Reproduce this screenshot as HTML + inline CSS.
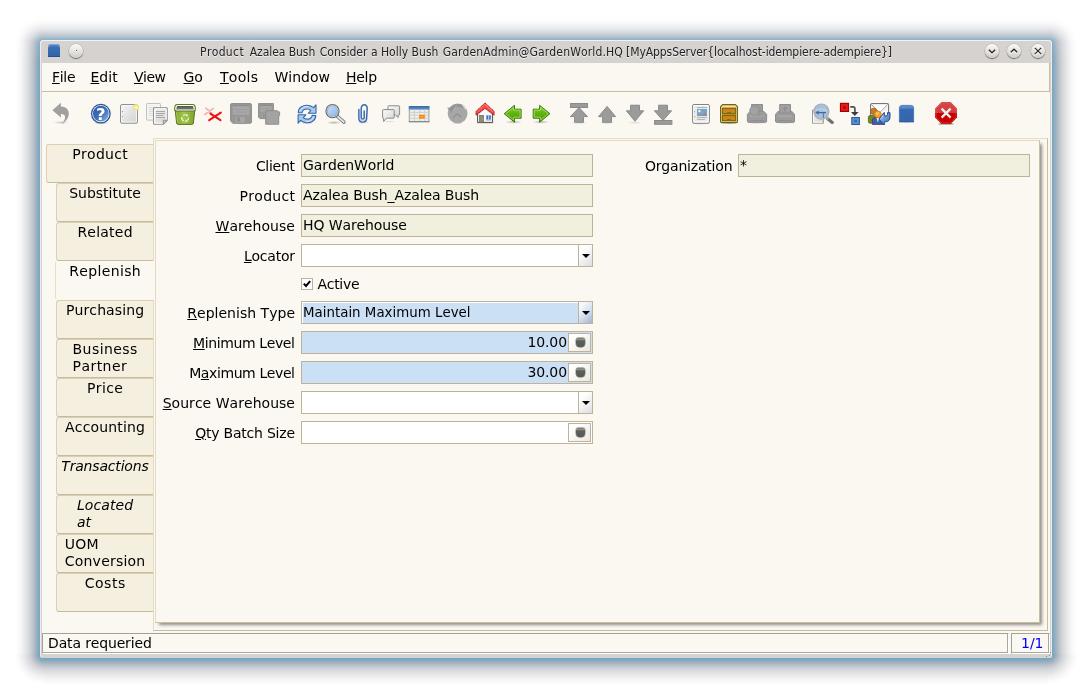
<!DOCTYPE html>
<html lang="en"><head><meta charset="utf-8"><title>Product</title>
<style>
html,body{margin:0;padding:0;background:#fff;width:1092px;height:698px;overflow:hidden}
body{position:relative;will-change:transform;font-kerning:none;font-family:"DejaVu Sans","Liberation Sans",sans-serif;font-size:14px;line-height:17px;color:#000}
div,span,svg{position:absolute;box-sizing:border-box}
u{text-decoration:underline;text-underline-offset:1px;text-decoration-thickness:1px}
/* window shadow */
.sh{pointer-events:none}
#shT{left:44px;top:12px;width:1004px;height:28px;background:linear-gradient(to top,#6fa8c8 0px,#84a9c0 1.5px,#96aebf 3px,#acb7c4 5px,#bcc3cb 7px,#d1d4d8 10px,#e3e4e6 14px,#f3f3f3 18px,#fafafa 21px,#ffffff 25px)}
#shB{left:44px;top:658px;width:1004px;height:28px;background:linear-gradient(to bottom,#6aa9ca 0px,#7aa8c3 1.5px,#8eabbf 3px,#a5b4c2 5px,#b8bfc7 7px,#cccfd4 10px,#dedfe1 14px,#ececed 18px,#f6f6f6 22px,#fff 27px)}
#shL{left:12px;top:44px;width:28px;height:610px;background:linear-gradient(to left,#6fa8c8 0px,#84a9c0 1.5px,#96aebf 3px,#acb7c4 5px,#bcc3cb 7px,#d1d4d8 10px,#e3e4e6 14px,#f3f3f3 18px,#fafafa 21px,#ffffff 25px)}
#shR{left:1052px;top:44px;width:28px;height:610px;background:linear-gradient(to right,#6fa8c8 0px,#84a9c0 1.5px,#96aebf 3px,#acb7c4 5px,#bcc3cb 7px,#d1d4d8 10px,#e3e4e6 14px,#f3f3f3 18px,#fafafa 21px,#ffffff 25px)}
.shC{width:32px;height:32px}
#shTL{left:12px;top:12px;background:radial-gradient(circle at 32px 32px,#6fa8c8 4px,#84a9c0 5.5px,#96aebf 7px,#acb7c4 9px,#bcc3cb 11px,#d1d4d8 14px,#e3e4e6 18px,#f3f3f3 22px,#fafafa 25px,#ffffff 29px)}
#shTR{left:1048px;top:12px;background:radial-gradient(circle at 0 32px,#6fa8c8 4px,#84a9c0 5.5px,#96aebf 7px,#acb7c4 9px,#bcc3cb 11px,#d1d4d8 14px,#e3e4e6 18px,#f3f3f3 22px,#fafafa 25px,#ffffff 29px)}
#shBL{left:12px;top:654px;background:radial-gradient(circle at 32px 0,#6ca8c9 4.0px,#7fa8c1 5.5px,#92acbf 7.0px,#a8b5c3 9.0px,#bac1c9 11.0px,#ced1d6 14.0px,#e0e1e3 18.0px,#efeff0 22.0px,#f8f8f8 25.5px,#ffffff 30.0px)}
#shBR{left:1048px;top:654px;background:radial-gradient(circle at 0 0,#6ca8c9 4.0px,#7fa8c1 5.5px,#92acbf 7.0px,#a8b5c3 9.0px,#bac1c9 11.0px,#ced1d6 14.0px,#e0e1e3 18.0px,#efeff0 22.0px,#f8f8f8 25.5px,#ffffff 30.0px)}
#shFade{left:0;top:10px;width:1092px;height:52px;background:linear-gradient(to bottom,#fff 0,#fff 2px,rgba(255,255,255,.9) 6px,rgba(255,255,255,.66) 11px,rgba(255,255,255,.46) 16px,rgba(255,255,255,.34) 21px,rgba(255,255,255,.27) 25px,rgba(255,255,255,.22) 28px,rgba(255,255,255,.14) 30px,rgba(255,255,255,.07) 38px,rgba(255,255,255,0) 52px)}
/* window */
#win{left:40px;top:40px;width:1012px;height:618px;background:#d6d2d0;border-radius:4px 4px 3px 3px;box-shadow:inset 0 1px 0 #f4f2f1,inset 1px 0 0 #efebe9,inset -1px 0 0 #efebe9}
#title{left:200px;top:43.5px;width:700px;height:17px;white-space:pre;font-family:"DejaVu Sans Condensed","DejaVu Sans","Liberation Sans",sans-serif;font-size:12px;line-height:17px;color:#222;text-shadow:0 1px 0 rgba(255,255,255,.7)}
.wb{width:14px;height:14px;border-radius:50%;background:linear-gradient(#fafafa,#e4e2e0 55%,#cfccc9);box-shadow:0 1px 1px rgba(0,0,0,.45),0 0 0 .5px rgba(0,0,0,.18)}
#content{left:42px;top:63px;width:1008px;height:591px;background:#fbf8f1}
#menubar{left:42px;top:63px;width:1008px;height:29px;border-bottom:1px solid #c9bea2;border-right:1px solid #c9bea2}
.mi{top:69px;height:17px;white-space:nowrap}
/* tabs */
.tab{left:56px;width:97px;height:39px;background:#f5efe0;border:1px solid #d9cfb3;border-right:none;border-bottom-color:#c6bb9e;border-radius:3px 0 0 3px;text-align:center}
.tab span{position:static;display:inline-block;text-align:left;margin-top:1px;line-height:17px;white-space:nowrap}
.tab i{font-style:italic}
/* form */
.lbl{height:17px;white-space:nowrap;text-align:right;width:200px;left:95px}
.fld{left:301px;width:292px;height:23px;border:1px solid #beb399;background:#fff;white-space:nowrap;overflow:hidden}
.ro{background:#f1efde}
.man{background:#cce0f5}
.fld .tx{left:1px;top:2px;height:17px;line-height:17px;letter-spacing:-.1px}
.cbb{left:276px;top:0;width:14px;height:21px;border-left:1px solid #beb399;background:linear-gradient(135deg,#fff 25%,#e0e0e0 95%)}
.cbb:after{content:"";position:absolute;left:3px;top:9px;border:4px solid transparent;border-top:4px solid #000;border-bottom:none}
.nb{left:266px;top:1px;width:23px;height:19px;border:1px solid #beb399;background:linear-gradient(135deg,#fff 20%,#ece9e1 95%)}
.calc{position:absolute;left:6.5px;top:3.6px;width:9.6px;height:9.4px;border-radius:2px 2px 3px 3px/2px 2px 4px 4px;background:linear-gradient(#74786f 0,#8a8e84 12%,#8a8e84 22%,#5d605b 30%,#555853 100%);box-shadow:0 0 0 .4px #6a6d67}
#title span{top:0;white-space:pre}
</style></head><body>
<div class="sh" id="shT"></div><div class="sh" id="shB"></div><div class="sh" id="shL"></div><div class="sh" id="shR"></div>
<div class="sh shC" id="shTL"></div><div class="sh shC" id="shTR"></div><div class="sh shC" id="shBL"></div><div class="sh shC" id="shBR"></div><div class="sh" id="shFade"></div>
<div id="win"></div>
<!-- title bar -->
<svg style="left:47px;top:43px" width="14" height="15" viewBox="0 0 14 15"><defs><linearGradient id="tiA" x1="0" y1="0" x2="0" y2="1"><stop offset="0" stop-color="#5d8fd0"/><stop offset=".25" stop-color="#3a6fb3"/><stop offset="1" stop-color="#2f63a6"/></linearGradient></defs><path d="M1 14V4.2Q1 1 4 1H10Q13 1 13 4.2V14Z" fill="url(#tiA)"/><path d="M1.5 4.2Q1.5 1.5 4 1.5H10Q12.5 1.5 12.5 4.2" fill="none" stroke="#7ba6dc" stroke-width="1"/><path d="M1 13.5H13" stroke="#234f8c" stroke-width="1"/></svg>
<div class="wb" style="left:69.4px;top:43.5px"><span style="left:6.2px;top:6px;width:1.6px;height:1.8px;border-radius:1px;background:#222;box-shadow:0 1px 0 #fff"></span></div>
<div id="title"><span style="left:0;letter-spacing:.367px">Product</span><span style="left:49.8px;letter-spacing:-.06px">Azalea Bush</span><span style="left:119.8px;letter-spacing:.015px">Consider a Holly Bush</span><span style="left:242.7px;letter-spacing:.14px">GardenAdmin@GardenWorld.HQ</span><span style="left:426px;letter-spacing:-.068px">[MyAppsServer{localhost-idempiere-adempiere}]</span></div>
<div class="wb" style="left:984.6px;top:43.5px"><svg style="left:0;top:0" width="14" height="14" viewBox="0.5 0.5 14 14"><path d="M4.3 6.2L7.5 9.3L10.7 6.2" fill="none" stroke="#fff" stroke-width="1.6" transform="translate(0,1)"/><path d="M4.3 6.2L7.5 9.3L10.7 6.2" fill="none" stroke="#2a2a2a" stroke-width="1.35"/></svg></div>
<div class="wb" style="left:1007.3px;top:43.5px"><svg style="left:0;top:0" width="14" height="14" viewBox="0.5 0.5 14 14"><path d="M4.3 8.8L7.5 5.7L10.7 8.8" fill="none" stroke="#fff" stroke-width="1.6" transform="translate(0,1)"/><path d="M4.3 8.8L7.5 5.7L10.7 8.8" fill="none" stroke="#2a2a2a" stroke-width="1.35"/></svg></div>
<div class="wb" style="left:1030.5px;top:43.5px"><svg style="left:0;top:0" width="14" height="14" viewBox="0.5 0.5 14 14"><path d="M4.3 4.3L10.7 10.7M10.7 4.3L4.3 10.7" fill="none" stroke="#fff" stroke-width="1.5" transform="translate(0,1)"/><path d="M4.3 4.3L10.7 10.7M10.7 4.3L4.3 10.7" fill="none" stroke="#2a2a2a" stroke-width="1.2"/></svg></div>
<div id="content"></div>
<!-- menu bar -->
<div id="menubar"></div>
<span class="mi" style="left:52px;letter-spacing:-.3px"><u>F</u>ile</span>
<span class="mi" style="left:90.5px"><u>E</u>dit</span>
<span class="mi" style="left:134px;letter-spacing:-.5px"><u>V</u>iew</span>
<span class="mi" style="left:183.5px"><u>G</u>o</span>
<span class="mi" style="left:220px;letter-spacing:.3px"><u>T</u>ools</span>
<span class="mi" style="left:274.5px">Window</span>
<span class="mi" style="left:346px;letter-spacing:-.3px"><u>H</u>elp</span>
<!-- toolbar -->
<div id="toolbar" style="left:42px;top:92px;width:1008px;height:46px"></div>
<!--ICONS-->
<svg width="0" height="0" style="left:0;top:0"><defs>
<linearGradient id="gHelp" x1="0" y1="0" x2="1" y2="1"><stop offset="0" stop-color="#2c5ea6"/><stop offset=".55" stop-color="#3d70b8"/><stop offset="1" stop-color="#9cc0ea"/></linearGradient>
<linearGradient id="gPage" x1="0" y1="0" x2="1" y2="1"><stop offset="0" stop-color="#f2f2f2"/><stop offset="1" stop-color="#d4d4d4"/></linearGradient>
<linearGradient id="gTrash" x1="0" y1="0" x2="1" y2="0"><stop offset="0" stop-color="#84a82c"/><stop offset=".45" stop-color="#a2c64a"/><stop offset="1" stop-color="#7fa22a"/></linearGradient>
<linearGradient id="gGreen" x1="0" y1="0" x2="0" y2="1"><stop offset="0" stop-color="#90d436"/><stop offset=".45" stop-color="#62b414"/><stop offset="1" stop-color="#4a9605"/></linearGradient>
<linearGradient id="gLens" x1="0" y1="0" x2="1" y2="1"><stop offset="0" stop-color="#c8def6"/><stop offset="1" stop-color="#8db6e6"/></linearGradient>
<linearGradient id="gBub" x1="0" y1="0" x2="1" y2="1"><stop offset="0" stop-color="#fdfdfd"/><stop offset="1" stop-color="#d2d2d2"/></linearGradient>
<linearGradient id="gHdr" x1="0" y1="0" x2="0" y2="1"><stop offset="0" stop-color="#2f62a6"/><stop offset="1" stop-color="#6a98d0"/></linearGradient>
<linearGradient id="gExit" x1="0" y1="0" x2="0" y2="1"><stop offset="0" stop-color="#d84848"/><stop offset=".5" stop-color="#d43a3a"/><stop offset=".52" stop-color="#c40000"/><stop offset="1" stop-color="#cc0000"/></linearGradient>
<linearGradient id="gBlk" x1="0" y1="0" x2="0" y2="1"><stop offset="0" stop-color="#6a9ad6"/><stop offset=".2" stop-color="#4a7cc0"/><stop offset=".22" stop-color="#3769b1"/><stop offset="1" stop-color="#3465ad"/></linearGradient>
<linearGradient id="gSky" x1="0" y1="0" x2="0" y2="1"><stop offset="0" stop-color="#6aa0e0"/><stop offset=".6" stop-color="#86a8d4"/><stop offset="1" stop-color="#8a8f9c"/></linearGradient>
<radialGradient id="gShadow"><stop offset="0" stop-color="#000" stop-opacity=".28"/><stop offset="1" stop-color="#000" stop-opacity="0"/></radialGradient>
<linearGradient id="gArr" x1="0" y1="0" x2="1" y2="1"><stop offset="0" stop-color="#9cc4f0"/><stop offset="1" stop-color="#3a6fb8"/></linearGradient>
</defs></svg>
<!-- undo -->
<svg style="left:49px;top:101px" width="24" height="24" viewBox="0 0 24 24"><ellipse cx="12" cy="21.5" rx="8" ry="1.8" fill="url(#gShadow)" opacity=".6"/><path d="M3.4 9.2L11.9 1.8V5.4C16.5 5.3 20 8.3 19.8 13C19.6 17.8 15.6 21.8 12.4 23C15 20.4 16.4 18 16 15.6C15.6 13.6 14 12.9 11.9 13V16.6Z" fill="#a0a0a0"/></svg>
<!-- help -->
<svg style="left:89px;top:101px" width="24" height="24" viewBox="0 0 24 24"><ellipse cx="12" cy="22" rx="8" ry="1.6" fill="url(#gShadow)"/><circle cx="11.85" cy="12.7" r="9.9" fill="#2b5797"/><circle cx="11.85" cy="12.7" r="8.6" fill="#fff"/><circle cx="11.85" cy="12.7" r="7.9" fill="url(#gHelp)"/><text x="11.9" y="18.7" text-anchor="middle" font-family="'DejaVu Sans','Liberation Sans',sans-serif" font-weight="bold" font-size="16.5" fill="#fff">?</text></svg>
<!-- new -->
<svg style="left:117px;top:101px" width="24" height="24" viewBox="0 0 24 24"><rect x="3.6" y="3.6" width="16.8" height="18.6" rx="1.2" fill="#fff" stroke="#858781" stroke-width="1"/><rect x="5.1" y="5.1" width="13.8" height="15.6" fill="url(#gPage)"/><rect x="5" y="10" width="1.2" height="1.2" fill="#999"/><rect x="5" y="15" width="1.2" height="1.2" fill="#999"/><rect x="6" y="10.8" width="1" height="1" fill="#fff"/><rect x="6" y="15.8" width="1" height="1" fill="#fff"/><circle cx="19" cy="6.3" r="3.3" fill="#f4ee9a" opacity=".45"/><circle cx="19" cy="6.3" r="2.3" fill="#f6f6ee" stroke="#efe36e" stroke-width="1.3"/></svg>
<!-- copy -->
<svg style="left:145px;top:101px" width="24" height="24" viewBox="0 0 24 24"><rect x="1.5" y="2.5" width="14" height="16.6" rx=".8" fill="#f3f3f2" stroke="#c2c2be" stroke-width="1"/><path d="M4 6.5H13M4 8.5H13M4 10.5H13M4 12.5H13M4 14.5H9" stroke="#dcdcda" stroke-width="1"/><path d="M8.6 6.8H22.2V19.6L18.4 23.2H8.6Z" fill="url(#gPage)" stroke="#858781" stroke-width="1" stroke-linejoin="round"/><path d="M9.6 7.8H21.2V19.2L18 22.2H9.6Z" fill="none" stroke="#fff" stroke-width="1"/><path d="M11 10.5H20M11 12.5H20M11 14.5H18M11 16.5H20" stroke="#a9a9a7" stroke-width="1"/><path d="M22.2 19.3L18.3 23.2V19.3Z" fill="#c8c8c6" stroke="#858781" stroke-width=".8" stroke-linejoin="round"/></svg>
<!-- trash -->
<svg style="left:173px;top:101px" width="24" height="24" viewBox="0 0 24 24"><ellipse cx="12" cy="22.8" rx="10" ry="1.3" fill="url(#gShadow)"/><path d="M2.2 9L3.6 22C3.7 23 4.2 23.4 5.2 23.4H18.8C19.8 23.4 20.3 23 20.4 22L21.8 9Z" fill="url(#gTrash)" stroke="#58781a" stroke-width="1" stroke-linejoin="round"/><path d="M3.6 11.4L4.6 21.6" stroke="#b4d45e" stroke-width=".9" fill="none" opacity=".7"/><path d="M1.1 8.2Q.9 3 4.4 3H19.6Q23.1 3 22.9 8.2Q22.9 10.4 21 10.4H3Q1.1 10.4 1.1 8.2Z" fill="#5a7a1c"/><path d="M2.2 8Q2.1 4.1 4.6 4.1H19.4Q21.9 4.1 21.8 8Q21.8 9.4 20.6 9.4H3.4Q2.2 9.4 2.2 8Z" fill="#fff"/><path d="M3.1 8.4L4 5.5Q4.1 5 4.8 5H19.2Q19.9 5 20 5.5L20.9 8.4Z" fill="#6e726c"/><path d="M4 5.6Q4.1 5 4.8 5H19.2Q19.9 5 20 5.6L20.3 6.6H3.7Z" fill="#565a54"/><g fill="none" stroke="#e6f0d0" stroke-width="1.2"><path d="M10 14.6Q12 13 14 14.4"/><path d="M15.4 16.4Q15.8 18.6 13.8 19.8"/><path d="M10.8 20Q8.6 19.2 8.8 16.8"/></g><path d="M13.2 13L15.6 14.2L13.6 15.8Z M12.8 18.6L14.4 21L11.8 21Z M7.6 17.6L8.8 15.4L10.2 17.8Z" fill="#e6f0d0"/></svg>
<!-- delete -->
<svg style="left:201px;top:101px" width="24" height="24" viewBox="0 0 24 24"><path d="M3.8 13.5L12.4 7.4M4.8 7.1L10.6 12" stroke="#f8b0b0" stroke-width="1.7" stroke-linecap="round"/><path d="M8.2 19.2L19.8 11.6M9.4 12.6L19.4 19.2" stroke="#ee1212" stroke-width="2.1" stroke-linecap="round"/></svg>
<!-- save -->
<svg style="left:229px;top:101px" width="24" height="24" viewBox="0 0 24 24"><ellipse cx="12" cy="22.6" rx="8" ry="1.2" fill="url(#gShadow)" opacity=".5"/><path d="M2.6 2.6H21.4Q22.4 2.6 22.4 3.6V21.2Q22.4 22.2 21.4 22.2H3.8L1.6 20V3.6Q1.6 2.6 2.6 2.6Z" fill="#989898" stroke="#8b8b8b" stroke-width="1"/><rect x="3.7" y="4" width="16.6" height="1.2" fill="#8e8e8e"/><rect x="3.7" y="5.2" width="16.6" height="8.6" fill="#a7a7a7"/><path d="M6 8.5H18M6 11H18" stroke="#9e9e9e" stroke-width="1"/><rect x="6" y="15.2" width="10.2" height="7" fill="#a6a6a6" stroke="#909090" stroke-width=".6"/><rect x="8.2" y="16.4" width="2.6" height="4.4" fill="#8d8d8d"/></svg>
<!-- save new -->
<svg style="left:257px;top:101px" width="24" height="24" viewBox="0 0 24 24"><path d="M1.6 2.6H16.4V17.6H3L1.6 16.2Z" fill="#9a9a9a" stroke="#8b8b8b" stroke-width="1"/><rect x="3.4" y="3.8" width="11.4" height="1.2" fill="#8c8c8c"/><rect x="3.4" y="5" width="11.4" height="6" fill="#a6a6a6"/><path d="M4.5 7.6H13.5" stroke="#9e9e9e" stroke-width="1"/><rect x="5" y="12.2" width="5" height="5" fill="#a4a4a4"/><rect x="6" y="13" width="1.6" height="3.6" fill="#8e8e8e"/><path d="M8.7 9.7H20.4L21.6 10.9H22.6V14.6H21.7V23.2H8.7Z" fill="#a3a3a3" stroke="#8d8d8d" stroke-width="1" stroke-linejoin="round"/></svg>
<!-- refresh -->
<svg style="left:295px;top:101px" width="24" height="24" viewBox="0 0 24 24"><ellipse cx="12" cy="22.2" rx="8" ry="1.3" fill="url(#gShadow)" opacity=".6"/><g fill="#a9c8ec" stroke="#3567ac" stroke-width="1.1" stroke-linejoin="round"><path id="rfA" d="M3.3 11.6C3.3 6.6 7.8 4.2 12.4 4.3C14.9 4.4 17 5.3 18.5 6.7L21 3.9V12.3H13.2L15.8 9.5C14.8 8.5 13.5 8 12 8C9.4 8 7.4 9.4 6.9 11.8Z"/><use href="#rfA" transform="rotate(180 12.05 13.05)"/></g><path d="M5 9.8C6.4 6.6 10 5.3 13 5.5M19 16.3C17.6 19.5 14 20.8 11 20.6" fill="none" stroke="#dbe9f8" stroke-width="1"/></svg>
<!-- find -->
<svg style="left:323px;top:101px" width="24" height="24" viewBox="0 0 24 24"><ellipse cx="11" cy="21.6" rx="8" ry="1.6" fill="url(#gShadow)"/><path d="M14 15L20.8 21" stroke="#6e6e6e" stroke-width="3.6" stroke-linecap="round"/><path d="M14 15L20.8 21" stroke="#e6e6e6" stroke-width="1.8" stroke-linecap="round"/><circle cx="9.5" cy="10.1" r="6.6" fill="#e9e9e9" stroke="#686868" stroke-width="1.1"/><circle cx="9.5" cy="10.1" r="5.2" fill="url(#gLens)" stroke="#7fa6da" stroke-width=".8"/></svg>
<!-- attachment -->
<svg style="left:351px;top:101px" width="24" height="24" viewBox="0 0 24 24"><ellipse cx="12" cy="21.8" rx="7" ry="1" fill="url(#gShadow)" opacity=".7"/><path d="M7.9 8.6V17.2C7.9 22.4 15.6 22.4 15.6 17.2L16.2 7.8C16.4 2.4 10.2 2.4 10.2 7.8V16.4C10.2 18.6 13.2 18.6 13.2 16.4V10" fill="none" stroke="#3969b0" stroke-width="1.5" stroke-linecap="round"/><path d="M8.9 9V17.2C8.9 21 14.6 21 14.6 17.2" fill="none" stroke="#8fb0dc" stroke-width=".7"/></svg>
<!-- chat -->
<svg style="left:379px;top:101px" width="24" height="24" viewBox="0 0 24 24"><ellipse cx="10" cy="20.6" rx="7" ry="1" fill="url(#gShadow)" opacity=".5"/><path d="M9.6 4.8H20Q20.6 4.8 20.6 5.4V13.4Q20.6 14 20 14H19.2V16.6L16.4 14H9.6Q9 14 9 13.4V5.4Q9 4.8 9.6 4.8Z" fill="url(#gBub)" stroke="#898b86" stroke-width="1" stroke-linejoin="round"/><path d="M4.2 8.6H14.6Q15.2 8.6 15.2 9.2V16.6Q15.2 17.2 14.6 17.2H7.6L4.6 20.4V17.2H4.2Q3.6 17.2 3.6 16.6V9.2Q3.6 8.6 4.2 8.6Z" fill="url(#gBub)" stroke="#898b86" stroke-width="1" stroke-linejoin="round"/></svg>
<!-- grid toggle -->
<svg style="left:407px;top:101px" width="24" height="24" viewBox="0 0 24 24"><rect x="2" y="20.4" width="20.4" height="1.4" fill="#000" opacity=".18"/><rect x="2.3" y="5.6" width="19.6" height="15" fill="#eeeeec" stroke="#9a9c97" stroke-width="1"/><rect x="1.8" y="5.1" width="20.6" height="3.6" fill="url(#gHdr)"/><path d="M7.4 8.7V20.4M12.6 8.7V20.4M17.7 8.7V20.4M2.6 11.4H21.6M2.6 14.2H21.6M2.6 17.4H21.6" stroke="#cfcfcb" stroke-width="1"/><rect x="12.3" y="14" width="5.4" height="3.5" rx=".8" fill="#f57900" stroke="#f8a23a" stroke-width=".6"/><rect x="13.6" y="15.2" width="2.8" height="1.1" fill="#fcc36c"/><rect x="1.9" y="20" width="20.4" height="1" fill="#8a8c87"/></svg>
<!-- history -->
<svg style="left:445px;top:101px" width="24" height="24" viewBox="0 0 24 24"><ellipse cx="12.5" cy="22.3" rx="7" ry="1" fill="url(#gShadow)" opacity=".35"/><circle cx="12.6" cy="12.5" r="9.9" fill="#a7a7a7"/><path d="M2 6.4L9 7L6.6 12Z" fill="#979797"/><path d="M5.6 9C7.6 4.6 13.6 2.8 18.6 6.2" fill="none" stroke="#939393" stroke-width="2.8"/><path d="M11.4 4.2C10 6.6 10.6 8.6 7.6 10.4" fill="none" stroke="#b4b4b4" stroke-width="1"/><path d="M7.6 16.8L12.5 12.7L16.2 16.2" fill="none" stroke="#8c8c8c" stroke-width="1.1"/><path d="M17.6 4.2L21.2 8.4" stroke="#e2e2e2" stroke-width="1.2"/></svg>
<!-- home -->
<svg style="left:473px;top:101px" width="24" height="24" viewBox="0 0 24 24"><rect x="4" y="21" width="16.4" height="1.6" fill="#000" opacity=".15"/><path d="M4.6 10.4L12 4.4L19.6 10.4V21.4H4.6Z" fill="#fafafa" stroke="#4c4c4c" stroke-width="1"/><path d="M5.6 12L12 6.6L18.6 12V14L12 8.4L5.6 14Z" fill="#cfcfcf" opacity=".6"/><rect x="6.6" y="14.4" width="4" height="7" fill="#8d8d7c" stroke="#6a6a5c" stroke-width=".7"/><rect x="9.2" y="17.6" width=".9" height=".9" fill="#d8c840"/><rect x="13.3" y="14.4" width="4.6" height="4.2" fill="#3b6fc0" stroke="#8aa6d6" stroke-width=".6"/><path d="M15.6 14.4V18.6" stroke="#dfe9f7" stroke-width=".8"/><rect x="13" y="18.9" width="5.2" height="1.1" fill="#cfcfcf"/><path d="M12.05 1.9L21.1 10.4V14.2L12.05 7.3L3 14.2V10.4Z" fill="#ee4848" stroke="#b80808" stroke-width="1" stroke-linejoin="round" stroke-dasharray="1.4 .5"/><path d="M12.05 3.6L19.9 11" stroke="#f79a9a" stroke-width=".9" fill="none"/><path d="M12.05 3.6L4.2 11" stroke="#f47c7c" stroke-width=".9" fill="none"/></svg>
<!-- prev -->
<svg style="left:501px;top:101px" width="24" height="24" viewBox="0 0 24 24"><ellipse cx="12.5" cy="21" rx="8.5" ry="1.8" fill="url(#gShadow)"/><path d="M3.2 12.7L13.5 4.3V8.2H20.1V17.2H13.5V21.2Z" fill="url(#gGreen)" stroke="#3b7d0c" stroke-width="1" stroke-linejoin="round"/><path d="M4.9 12.7L12.5 6.5V9.2H19.1V16.2H12.5V19Z" fill="none" stroke="#b4e66c" stroke-width=".9" opacity=".8"/></svg>
<!-- next -->
<svg style="left:529px;top:101px" width="24" height="24" viewBox="0 0 24 24"><ellipse cx="12" cy="21" rx="8.5" ry="1.8" fill="url(#gShadow)"/><path d="M20.9 12.7L10.6 4.3V8.2H4.2V17.2H10.6V21.2Z" fill="url(#gGreen)" stroke="#3b7d0c" stroke-width="1" stroke-linejoin="round"/><path d="M19.2 12.7L11.6 6.5V9.2H5.2V16.2H11.6V19Z" fill="none" stroke="#b4e66c" stroke-width=".9" opacity=".8"/></svg>
<!-- first -->
<svg style="left:567px;top:101px" width="24" height="24" viewBox="0 0 24 24"><ellipse cx="12" cy="21.8" rx="9" ry="1.5" fill="url(#gShadow)" opacity=".45"/><g fill="#9b9b9b" stroke="#8a8a8a" stroke-width="1"><rect x="3.5" y="2.5" width="17" height="4"/><path d="M12 6.6L20.6 15.6H16.5V21.3H7.6V15.6H3.4Z"/></g></svg>
<!-- up -->
<svg style="left:595px;top:101px" width="24" height="24" viewBox="0 0 24 24"><ellipse cx="12" cy="21.8" rx="9" ry="1.5" fill="url(#gShadow)" opacity=".45"/><path d="M12.1 5.4L20.6 15.6H16.5V21.3H7.6V15.6H3.5Z" fill="#9b9b9b" stroke="#8a8a8a" stroke-width="1"/></svg>
<!-- down -->
<svg style="left:623px;top:101px" width="24" height="24" viewBox="0 0 24 24"><ellipse cx="12" cy="21.6" rx="8" ry="1.5" fill="url(#gShadow)" opacity=".45"/><path d="M12 20.2L20.6 9.8H16.5V4.2H7.6V9.8H3.4Z" fill="#9b9b9b" stroke="#8a8a8a" stroke-width="1"/></svg>
<!-- last -->
<svg style="left:651px;top:101px" width="24" height="24" viewBox="0 0 24 24"><g fill="#9b9b9b" stroke="#8a8a8a" stroke-width="1"><path d="M12 19.4L20.6 9.8H16.5V4.2H7.6V9.8H3.4Z"/><rect x="3.5" y="19.5" width="17.4" height="3.8"/></g></svg>
<!-- report -->
<svg style="left:689px;top:101px" width="24" height="24" viewBox="0 0 24 24"><ellipse cx="12" cy="22.8" rx="8" ry="1" fill="url(#gShadow)" opacity=".7"/><rect x="3.6" y="3.5" width="16.8" height="18.8" rx="1.4" fill="#fff" stroke="#7f837c" stroke-width="1"/><rect x="5.2" y="5.1" width="13.6" height="15.4" fill="#e9e9e9"/><rect x="5" y="10.2" width="1" height="1" fill="#999"/><rect x="5" y="15.2" width="1" height="1" fill="#999"/><path d="M8 6.5H18M8 16.5H18M8 18.5H16" stroke="#b3b3b1" stroke-width="1"/><rect x="8" y="8" width="10" height="7" fill="url(#gSky)"/><circle cx="10.4" cy="10" r="1.2" fill="#f6f6c8"/><path d="M13 15L15.6 10.6L18 13.4V15Z" fill="#8a8e98" opacity=".8"/></svg>
<!-- archive -->
<svg style="left:717px;top:101px" width="24" height="24" viewBox="0 0 24 24"><ellipse cx="12" cy="22.4" rx="8" ry="1.2" fill="url(#gShadow)"/><path d="M5.6 3.6H18.4L20.4 5.6V20.4Q20.4 21.6 19.2 21.6H4.8Q3.6 21.6 3.6 20.4V5.6Z" fill="#f2dca4" stroke="#6b6512" stroke-width="1.2" stroke-linejoin="round"/><rect x="5" y="6.4" width="14" height="14" fill="#d18a18"/><rect x="5.4" y="7.6" width="13.2" height="5" fill="#cf8414" stroke="#6f6a1a" stroke-width="1"/><rect x="5.4" y="14.6" width="13.2" height="5" fill="#cf8414" stroke="#6f6a1a" stroke-width="1"/><rect x="10.2" y="11" width="3.6" height="1.4" fill="#7d6c1c"/><rect x="10.2" y="18" width="3.6" height="1.4" fill="#7d6c1c"/></svg>
<!-- print preview -->
<svg style="left:745px;top:101px" width="24" height="24" viewBox="0 0 24 24"><ellipse cx="12" cy="22" rx="8" ry="1.2" fill="url(#gShadow)" opacity=".5"/><g fill="#9c9c9c" stroke="#8d8d8d" stroke-width="1" stroke-linejoin="round"><rect x="6.5" y="3.5" width="11" height="8"/><path d="M5 10.4H19L21.6 13.4V20Q21.6 21.4 20.2 21.4H3.8Q2.4 21.4 2.4 20V13.4Z"/></g><circle cx="9.4" cy="9.6" r="4.6" fill="#a2a2a2" stroke="#949494" stroke-width="1"/><path d="M12.6 12.8L16 15.4" stroke="#949494" stroke-width="1.6"/><path d="M5 15.4H19" stroke="#acacac" stroke-width="1.4" stroke-dasharray="2 1.2"/><path d="M5 19.6H19" stroke="#8e8e8e" stroke-width="1"/></svg>
<!-- print -->
<svg style="left:773px;top:101px" width="24" height="24" viewBox="0 0 24 24"><ellipse cx="12" cy="22" rx="8" ry="1.2" fill="url(#gShadow)" opacity=".5"/><g fill="#9c9c9c" stroke="#8d8d8d" stroke-width="1" stroke-linejoin="round"><path d="M5 10.4H19L21.5 13.4V20Q21.5 21.4 20.1 21.4H3.9Q2.5 21.4 2.5 20V13.4Z"/><rect x="6.7" y="3.5" width="10.8" height="8.6" fill="#a1a1a1"/></g><path d="M12.1 5L15 8H13.2V10.6H11V8H9.2Z" fill="#929292"/><path d="M5.4 15.2H18.6" stroke="#adadad" stroke-width="1.2"/><path d="M5 19.6H19" stroke="#8e8e8e" stroke-width="1"/></svg>
<!-- zoom across -->
<svg style="left:810px;top:101px" width="24" height="24" viewBox="0 0 24 24"><path d="M2.5 9H13.4V22.2H2.5Z" fill="url(#gPage)" stroke="#9a9a9a" stroke-width="1"/><path d="M3.5 10V21.2H12.4" fill="none" stroke="#fff" stroke-width="1"/><path d="M17.4 17.4L22.2 21.4" stroke="#707070" stroke-width="3.2" stroke-linecap="round"/><path d="M16.8 16.8L18.4 18.2" stroke="#b0b0b0" stroke-width="2"/><circle cx="11.4" cy="10.6" r="7.5" fill="#a6c0de" stroke="#b0b0b0" stroke-width="1.4"/><path d="M6.4 9.6Q11.4 6.4 16.6 9.6" fill="none" stroke="#c4d8ee" stroke-width="1.2"/><path d="M5.2 11.6L8.6 9.4V11H16V12.2H8.6V13.8Z" fill="#34598a" opacity=".85"/><path d="M13.4 12.2V17" stroke="#34598a" stroke-width=".7"/></svg>
<!-- workflow -->
<svg style="left:838px;top:101px" width="24" height="24" viewBox="0 0 24 24"><rect x="2.5" y="2.4" width="8" height="8" fill="#e21c1c" stroke="#a60000" stroke-width="1.2"/><rect x="5" y="4.9" width="3" height="3" fill="#c40000"/><rect x="13.8" y="16.5" width="7.6" height="7" fill="#5c90d2" stroke="#2c5898" stroke-width="1"/><rect x="16.2" y="18.7" width="2.8" height="2.6" fill="#3869b2"/><path d="M12.2 5.9H15Q16.9 5.9 16.9 8V11.4" fill="none" stroke="#505050" stroke-width="1.7"/><path d="M13 11L20.6 11L16.8 15Z" fill="#3c3c3c"/></svg>
<!-- request -->
<svg style="left:867px;top:101px" width="24" height="24" viewBox="0 0 24 24"><rect x="3.6" y="2.6" width="18" height="13.6" rx=".8" fill="#fbfbfb" stroke="#676767" stroke-width="1"/><path d="M4.2 3.2L12.6 12L21 3.2" fill="none" stroke="#8c8c8c" stroke-width=".9"/><path d="M4.6 4L12.6 12.4L20.6 4V10H4.6Z" fill="#eceef4" opacity=".7"/><rect x="1.4" y="14.6" width="7" height="7.6" rx="1.6" fill="#6c8a2a" stroke="#4e661a" stroke-width=".8"/><circle cx="6.8" cy="10.4" r="3.2" fill="#c9782c" stroke="#a85e16" stroke-width=".7"/><path d="M5.4 23.4V19.6Q5.4 16.6 8.4 16.6H13.6Q16.2 16.6 16.4 19.6V23.4Z" fill="#3565a6" stroke="#5c2a78" stroke-width=".8"/><path d="M9.6 17L10.9 21.6L12.2 17Z" fill="#f4f4f4"/><circle cx="10.9" cy="13.4" r="3.4" fill="#f3a330" stroke="#d67c10" stroke-width=".8"/><circle cx="10.3" cy="12.6" r="1.4" fill="#fad080" opacity=".8"/><path d="M12 18.2L17.3 11.4V14.9H19Q20.5 14.9 20.5 13.4V11.7H23V15.6Q23 20.8 18.4 20.8H17.3V24Z" fill="url(#gArr)" stroke="#20498a" stroke-width="1" stroke-linejoin="round"/><path d="M13.6 18.2L16.4 14.4" stroke="#dbe8f8" stroke-width=".8"/></svg>
<!-- product -->
<svg style="left:894px;top:101px" width="24" height="24" viewBox="0 0 24 24"><ellipse cx="12.6" cy="21.2" rx="8.6" ry="1.4" fill="url(#gShadow)" opacity=".7"/><path d="M5.4 20.6V7.2Q5.4 4.4 8.2 4.4H16.8Q19.6 4.4 19.6 7.2V20.6Z" fill="url(#gBlk)" stroke="#4a7cc2" stroke-width="1"/><path d="M5 20.7H20" stroke="#2a58a0" stroke-width="1"/></svg>
<!-- exit -->
<svg style="left:934px;top:101px" width="24" height="24" viewBox="0 0 24 24"><ellipse cx="12" cy="23" rx="8" ry="1.3" fill="#2e4a44" opacity=".35"/><path d="M7.5 1H16.7L23 7.4V16.6L16.7 23H7.5L1.1 16.6V7.4Z" fill="url(#gExit)"/><path d="M7.9 2H16.3L22 7.8V16.2L16.3 22H7.900000000000001L2.1 16.2V7.8Z" fill="none" stroke="#e06060" stroke-width=".7" opacity=".7"/><path d="M7.6 7.6L16.6 16.6M16.6 7.6L7.6 16.6" stroke="#eef0f0" stroke-width="2.3"/></svg>
<!-- tabbed pane -->
<div id="paneO" style="left:153px;top:138px;width:895px;height:493px;border:1px solid #e6dcc2;border-right-color:#c8bc9c;border-bottom-color:#c8bc9c"></div>
<div id="paneI" style="left:155px;top:140px;width:885px;height:483px;border:1px solid #c9bea2;border-left-color:#e3dac0;border-top-color:#e3dac0;background:#fbf8f1;box-shadow:3px 3px 3px -1px rgba(60,55,45,.55)"></div>
<div class="tab" style="left:46px;width:107px;top:144px"><span style="letter-spacing:0.32px;margin-right:-0.32px">Product</span></div>
<div class="tab" style="top:183px"><span style="letter-spacing:-0.01px;margin-right:0.01px">Substitute</span></div>
<div class="tab" style="top:222px"><span style="letter-spacing:0.23px;margin-right:-0.23px">Related</span></div>
<div class="tab" style="top:300px"><span style="letter-spacing:0.11px;margin-right:-0.11px">Purchasing</span></div>
<div class="tab" style="top:339px"><span style="letter-spacing:0.44px;margin-right:-0.44px">Business<br>Partner</span></div>
<div class="tab" style="top:378px"><span style="letter-spacing:0.38px;margin-right:-0.38px">Price</span></div>
<div class="tab" style="top:417px"><span style="letter-spacing:0.16px;margin-right:-0.16px">Accounting</span></div>
<div class="tab" style="top:456px"><span style="letter-spacing:-0.18px;margin-right:0.18px"><i>Transactions</i></span></div>
<div class="tab" style="top:495px"><span style="letter-spacing:0.1px;margin-right:-0.1px"><i>Located<br>at</i></span></div>
<div class="tab" style="top:534px"><span style="letter-spacing:0.22px;margin-right:-0.22px">UOM<br>Conversion</span></div>
<div class="tab" style="top:573px"><span style="letter-spacing:0.57px;margin-right:-0.57px">Costs</span></div>
<div class="tab" style="top:261px;left:55px;width:99px;background:#fbf8f1;border-color:#e6dcc2;border-top-color:transparent;border-bottom-color:transparent"><span style="letter-spacing:0.34px;margin-right:-0.34px">Replenish</span></div>
<!-- form -->
<span class="lbl" style="top:158px;letter-spacing:-0.28px;margin-left:-0.28px">Client</span>
<div class="fld ro" style="top:154px"><span class="tx">GardenWorld</span></div>
<span class="lbl" style="top:188px;letter-spacing:0.3px;margin-left:0.3px">Product</span>
<div class="fld ro" style="top:184px"><span class="tx">Azalea Bush_Azalea Bush</span></div>
<span class="lbl" style="top:218px;letter-spacing:0.06px;margin-left:0.06px"><u>W</u>arehouse</span>
<div class="fld ro" style="top:214px"><span class="tx">HQ Warehouse</span></div>
<span class="lbl" style="top:248px;letter-spacing:-0.23px;margin-left:-0.23px"><u>L</u>ocator</span>
<div class="fld" style="top:244px"><div class="cbb"></div></div>
<div style="left:301px;top:278px;width:12px;height:12px;border:1px solid #beb399;background:#fff"><svg style="left:0;top:0" width="10" height="10" viewBox="0 0 10 10"><path d="M1.8 4.6L4 7L8.2 2.2" fill="none" stroke="#000" stroke-width="2"/></svg></div>
<span style="left:317.5px;top:276px;height:17px;white-space:nowrap;letter-spacing:-.3px">Active</span>
<span class="lbl" style="top:305px;letter-spacing:0.02px;margin-left:0.02px"><u>R</u>eplenish Type</span>
<div class="fld man" style="top:301px;box-shadow:inset 1px 1px 0 #fff"><span class="tx" style="font-size:13.35px;letter-spacing:.02px;left:1px">Maintain Maximum Level</span><div class="cbb" style="background:linear-gradient(135deg,#f4f8fd 20%,#cfdcec 60%,#9fb4cf 100%)"></div></div>
<span class="lbl" style="top:335px;letter-spacing:-0.38px;margin-left:-0.38px"><u>M</u>inimum Level</span>
<div class="fld man" style="top:331px"><span class="tx" style="left:auto;right:25px">10.00</span><div class="nb"><i class="calc"></i></div></div>
<span class="lbl" style="top:365px;letter-spacing:-0.4px;margin-left:-0.4px">M<u>a</u>ximum Level</span>
<div class="fld man" style="top:361px"><span class="tx" style="left:auto;right:25px">30.00</span><div class="nb"><i class="calc"></i></div></div>
<span class="lbl" style="top:395px;letter-spacing:0.03px;margin-left:0.03px"><u>S</u>ource Warehouse</span>
<div class="fld" style="top:391px"><div class="cbb"></div></div>
<span class="lbl" style="top:425px;letter-spacing:-0.22px;margin-left:-0.22px"><u>Q</u>ty Batch Size</span>
<div class="fld" style="top:421px"><div class="nb"><i class="calc"></i></div></div>
<span class="lbl" style="top:158px;left:532.5px;letter-spacing:-.2px;margin-left:-.2px">Organization</span>
<div class="fld ro" style="top:154px;left:738px"><span class="tx">*</span></div>
<!-- status bar -->
<div style="left:42px;top:633px;width:967px;height:21px;border:1px solid #a3a199;border-right-color:#fff;border-bottom-color:#fff;box-shadow:inset 0 -1px 0 #a9a79f,inset -1px 0 0 #a9a79f"></div>
<span style="left:48px;top:635px;height:17px;white-space:nowrap;letter-spacing:-.15px">Data requeried</span>
<div style="left:1011px;top:633px;width:39px;height:21px;border:1px solid #a3a199;border-right-color:#fff;border-bottom-color:#fff;box-shadow:inset 0 -1px 0 #a9a79f,inset -1px 0 0 #a9a79f"></div>
<span style="left:1018.5px;top:635px;height:17px;white-space:nowrap;color:#0000ff;width:25px;text-align:right">1/1</span>
<span style="left:1046px;top:656px;width:1px;height:1px;background:#8a8683"></span><span style="left:1049px;top:655px;width:1px;height:1px;background:#8a8683"></span><span style="left:1050px;top:652px;width:1px;height:1px;background:#8a8683"></span>
</body></html>
